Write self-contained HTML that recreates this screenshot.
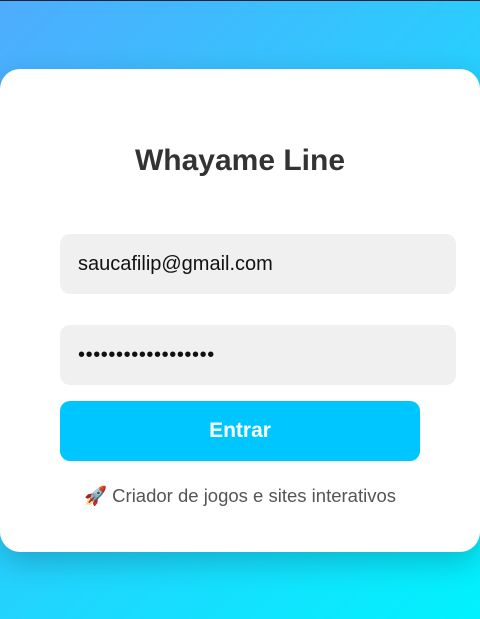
<!DOCTYPE html>
<html><head><meta charset="utf-8"><style>
html,body{margin:0;padding:0}
body{width:480px;height:619px;overflow:hidden;position:relative;background:linear-gradient(135deg,#4facfe,#00f2fe);font-family:"Liberation Sans",Roboto,sans-serif;border-top:1px solid #223;box-sizing:border-box}
.card{position:absolute;left:0;top:68px;width:480px;height:483px;background:#fff;border-radius:20px;box-shadow:0 10px 30px rgba(0,0,0,0.2)}
h1{position:absolute;top:75px;left:0;width:480px;margin:0;text-align:center;font-size:30px;font-weight:bold;color:#333}
.in{position:absolute;left:60px;width:396px;height:60px;background:#f0f0f0;border-radius:10px;box-sizing:border-box;padding-left:18px;line-height:60px;font-size:20px;color:#111}
.btn{position:absolute;left:60px;top:332px;width:360px;height:60px;background:#00c6ff;border-radius:10px;color:#fff;font-weight:bold;font-size:21px;text-align:center;line-height:60px}
.f{position:absolute;top:416px;left:0;width:480px;text-align:center;font-size:18.5px;color:#555}
</style></head><body>
<div class="card">
<h1>Whayame Line</h1>
<div class="in" style="top:165px">saucafilip@gmail.com</div>
<div class="in" style="top:256px;letter-spacing:0.6px">••••••••••••••••••</div>
<div class="btn">Entrar</div>
<div class="f">🚀 Criador de jogos e sites interativos</div>
</div>
</body></html>
